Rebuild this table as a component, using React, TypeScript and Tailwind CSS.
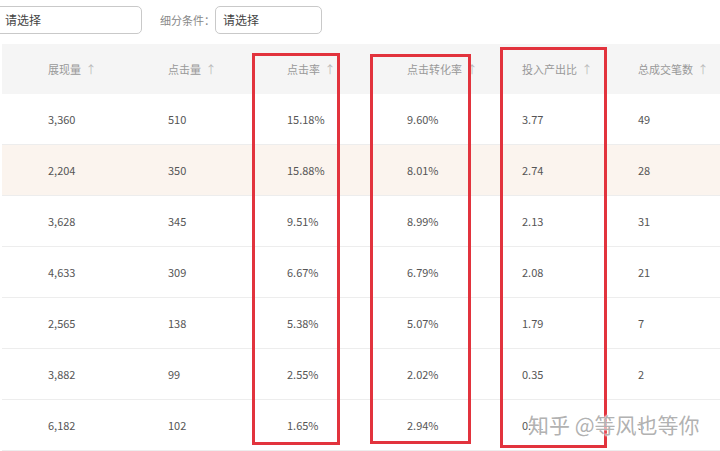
import React from "react";

const headers = ["展现量", "点击量", "点击率", "点击转化率", "投入产出比", "总成交笔数"];

const rows = [
  ["3,360", "510", "15.18%", "9.60%", "3.77", "49"],
  ["2,204", "350", "15.88%", "8.01%", "2.74", "28"],
  ["3,628", "345", "9.51%", "8.99%", "2.13", "31"],
  ["4,633", "309", "6.67%", "6.79%", "2.08", "21"],
  ["2,565", "138", "5.38%", "5.07%", "1.79", "7"],
  ["3,882", "99", "2.55%", "2.02%", "0.35", "2"],
  ["6,182", "102", "1.65%", "2.94%", "0.11", "3"],
];

const cols = "grid grid-cols-[166px_119px_120px_115px_116px_1fr]";

export default function App() {
  return (
    <div
      className="relative w-[720px] h-[451px] overflow-hidden bg-white"
      style={{ fontFamily: '"Noto Sans CJK SC", "Noto Sans", sans-serif' }}
    >
      {/* filters */}
      <div className="flex items-center h-[44px] pb-[4px]">
        <div className="ml-[-8px] w-[150px] h-[28px] border border-[#c9c9c9] rounded-[5px] flex items-center pl-[12px] text-[12px] text-[#444]">
          请选择
        </div>
        <span className="ml-[18px] text-[11px] text-[#888]">细分条件：</span>
        <div className="ml-[0px] w-[107px] h-[28px] border border-[#c9c9c9] rounded-[5px] flex items-center pl-[7px] text-[12px] text-[#444]">
          请选择
        </div>
      </div>

      {/* table */}
      <div className="ml-[2px]">
        <div className={`${cols} h-[50px] items-center bg-[#f5f5f5] text-[11px] text-[#999]`}>
          {headers.map((h, i) => (
            <div key={h} className={i === 0 ? "pl-[46px]" : ""}>
              {h} <span className="text-[#bbb] ml-[2px]">↑</span>
            </div>
          ))}
        </div>
        {rows.map((r, ri) => (
          <div
            key={ri}
            className={`${cols} h-[51px] items-center border-b border-[#ededed] text-[11px] text-[#555] ${
              ri === 1 ? "bg-[#fbf4ee]" : "bg-white"
            }`}
          >
            {r.map((c, ci) => (
              <div key={ci} className={ci === 0 ? "pl-[46px]" : ""}>
                {c}
              </div>
            ))}
          </div>
        ))}
      </div>

      {/* red highlight boxes */}
      <div className="absolute left-[252px] top-[53px] w-[88px] h-[392px] border-[3px] border-[#e2333d]" />
      <div className="absolute left-[370px] top-[54px] w-[101px] h-[390px] border-[3px] border-[#e2333d]" />
      <div className="absolute left-[500px] top-[47px] w-[107px] h-[401px] border-[3px] border-[#e2333d]" />

      {/* watermark */}
      <div
        className="absolute left-[528px] top-[409px] text-[21px] text-[#a8a8a8]/90"
        style={{ textShadow: "0 0 2px #fff, 0 0 2px #fff" }}
      >
        知乎 @等风也等你
      </div>
    </div>
  );
}
